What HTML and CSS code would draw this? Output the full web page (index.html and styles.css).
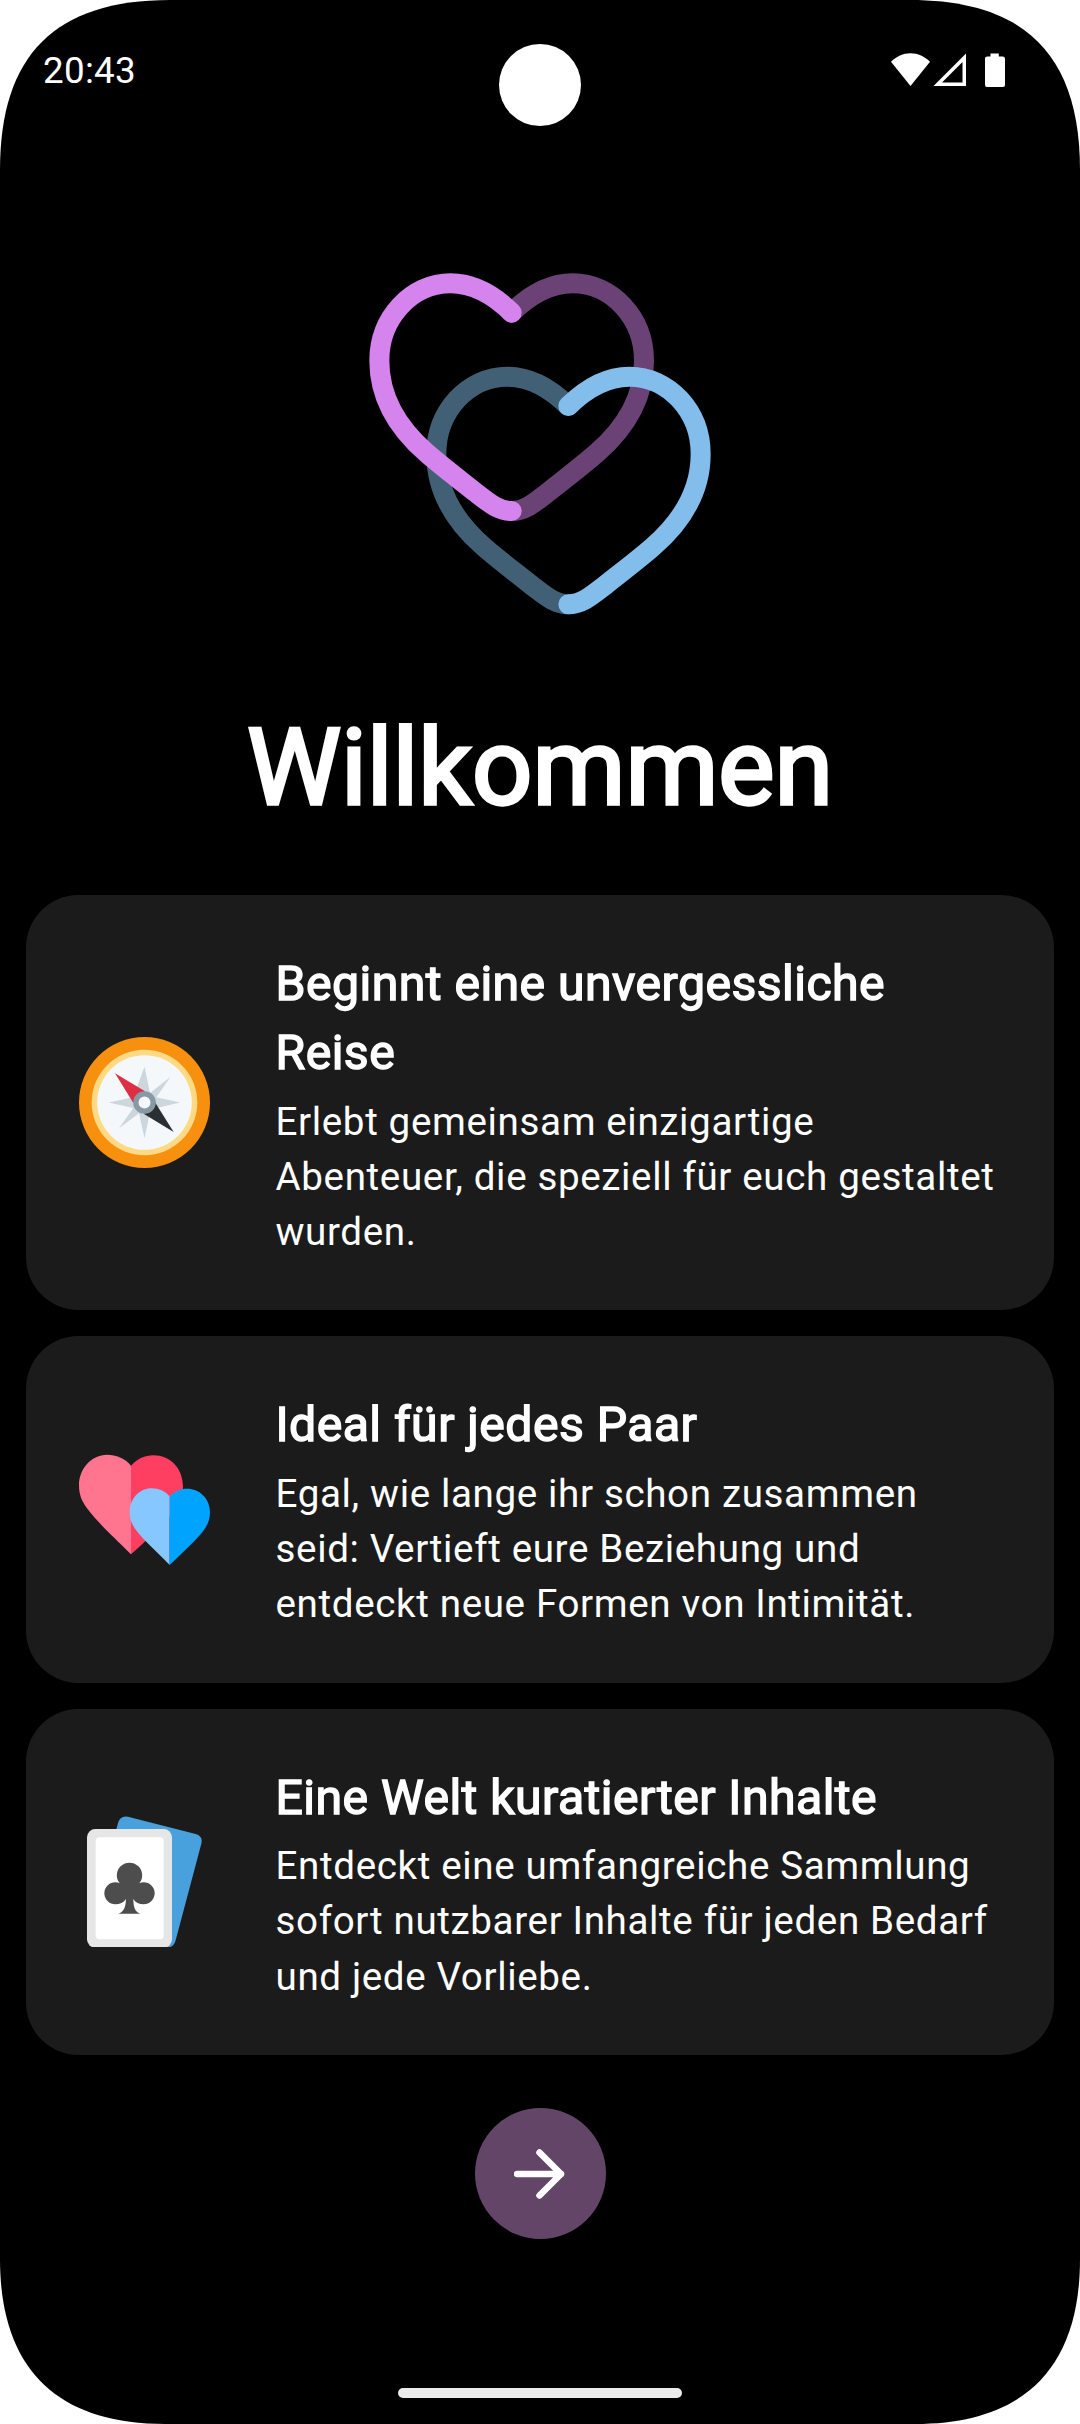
FILE: index.html
```html
<!DOCTYPE html>
<html lang="de">
<head>
<meta charset="utf-8">
<title>Willkommen</title>
<link rel="stylesheet" href="styles.css">
</head>
<body>
<div class="screen">
  <header class="status-bar">
    <span class="clock">20:43</span>
    <svg class="status-icons" viewBox="0 0 120 36" aria-hidden="true">
      <path fill="#fff" d="M0 8.8C5.500 3.500 12 .3 19.500 .3S33.500 3.500 39 8.800L19.500 33Z"/>
      <path fill="#fff" fill-rule="evenodd" d="M42.500 33L75 .5V33ZM51 29.500H71.500V9Z"/>
      <path fill="#fff" d="M99.500 .5h8.300v3h4a2.200 2.200 0 0 1 2.200 2.200V32a2 2 0 0 1-2 2H96a2 2 0 0 1-2-2V5.700a2.200 2.200 0 0 1 2.200-2.200h3.300z"/>
    </svg>
  </header>
  <div class="camera"></div>

  <main class="content">
    <svg class="logo" viewBox="0 0 1140 1140" aria-hidden="true">
      <g fill="none" stroke-width="60" stroke-linecap="round">
        <path stroke="#6b4275" d="M485 188C540 134 605 100 668 100C786 100 882 204 882 332C882 447 820 540 738 611C692 651 640 690 595 726C555 757 525 783 485 783"/>
        <path stroke="#426075" d="M655 468C600 414 535 380 472 380C354 380 259 484 259 612C259 727 320 820 402 891C448 931 500 970 545 1006C585 1037 615 1063 655 1063"/>
        <path stroke="#d583ed" d="M485 188C430 134 365 100 302 100C184 100 88 204 88 332C88 447 150 540 232 611C278 651 330 690 375 726C415 757 445 783 485 783"/>
        <path stroke="#82bdeb" d="M655 468C710 414 775 380 838 380C956 380 1052 484 1052 612C1052 727 990 820 908 891C862 931 810 970 765 1006C725 1037 695 1063 655 1063"/>
      </g>
    </svg>

    <h1 class="title">Willkommen</h1>

    <section class="cards">
      <article class="card">
        <svg class="card-icon" viewBox="0 0 393 393" aria-hidden="true">
          <circle cx="196.500" cy="196.500" r="196.500" fill="#f7900e"/>
          <circle cx="196.500" cy="196.500" r="158.500" fill="#ffd983"/>
          <circle cx="196.500" cy="196.500" r="142" fill="#f5f8fa"/>
          <path fill="#ccd6dd" d="M196.500 89L213 168L274 120L232 181L304 196.500L232 213L213 226L196.500 304L180 229L120 274L163 213L89 196.500L163 181Z"/>
          <path fill="#dd2e44" d="M108 109L198 163L163 198Z"/>
          <path fill="#292f33" d="M284 285L195 231L229 197Z"/>
          <circle cx="196.500" cy="196.500" r="26" fill="#f5f8fa" stroke="#8899a6" stroke-width="16"/>
        </svg>
        <div class="card-text">
          <h2>Beginnt eine unvergessliche Reise</h2>
          <p>Erlebt gemeinsam einzigartige Abenteuer, die speziell für euch gestaltet wurden.</p>
        </div>
      </article>

      <article class="card">
        <svg class="card-icon" viewBox="0 32 393 393" aria-hidden="true">
          <path fill="#ff748e" d="M156 363C100 307 58 270 24 225C8 202 0 184 0 155C0 106 38 64 84 64C111 64 138 74 156 97Z"/>
          <path fill="#ff3f62" d="M156 97C176 76 197 66 223 66C273 66 312 105 312 160C312 190 302 212 286 232C260 268 212 313 156 363Z"/>
          <path fill="#87c7ff" d="M272 395C230 351 197 324 171 290C158 272 152 257 152 236C152 196 182 165 218 165C240 165 258 173 272 189Z"/>
          <path fill="#00a4ff" d="M272 189C288 174 304 166 324 166C362 166 393 196 393 236C393 261 384 278 372 294C349 323 313 356 272 395Z"/>
        </svg>
        <div class="card-text">
          <h2>Ideal für jedes Paar</h2>
          <p>Egal, wie lange ihr schon zusammen seid: Vertieft eure Beziehung und entdeckt neue Formen von Intimität.</p>
        </div>
      </article>

      <article class="card">
        <svg class="card-icon" viewBox="27 49 393 393" aria-hidden="true">
          <path fill="#48a0dc" d="M144 70Q150 47 174 51L377 103Q400 110 394 132L317 422Q311 444 290 444L120 430V160Z"/>
          <rect x="51" y="88" width="255" height="356" rx="25" fill="#e6e6e6"/>
          <rect x="77" y="113" width="204" height="306" rx="12" fill="#fff"/>
          <path fill="#4d4d4d" d="M145 342C160 337 167 326 168 298C160 309 150 314 136 314A33 33 0 0 1 136 248Q143 248 149 251A38 38 0 1 1 208 251Q214 248 221 248A33 33 0 0 1 221 314C207 314 197 309 190 298C190 326 197 337 211 342Z"/>
        </svg>
        <div class="card-text">
          <h2>Eine Welt kuratierter Inhalte</h2>
          <p>Entdeckt eine umfangreiche Sammlung sofort nutzbarer Inhalte für jeden Bedarf und jede Vorliebe.</p>
        </div>
      </article>
    </section>

    <button class="next" type="button" aria-label="Weiter">
      <svg viewBox="0 0 52 52" aria-hidden="true">
        <path fill="none" stroke="#fff" stroke-width="6.500" stroke-linecap="round" stroke-linejoin="round" d="M3 26H47M25.500 4.500L47 26L25.500 47.500"/>
      </svg>
    </button>
  </main>

  <div class="home-bar"></div>
</div>
</body>
</html>
```
FILE: styles.css
```css
* {
  box-sizing: border-box;
}

body {
  margin: 0;
  background: #fff;
  font-family: Roboto, sans-serif;
  color: #fff;
}

.screen {
  position: relative;
  display: flex;
  flex-direction: column;
  align-items: center;
  width: 1080px;
  height: 2424px;
  padding-bottom: 26px;
  background: #000;
  /* display outline with continuous-curvature corners */
  clip-path: path("M0 170C0 55 55 0 170 0H910C1025 0 1080 55 1080 170V2259C1080 2368 1024 2424 915 2424H165C56 2424 0 2368 0 2259Z");
  overflow: hidden;
}

.status-bar {
  display: flex;
  align-items: center;
  justify-content: space-between;
  width: 100%;
  height: 142px;
  padding: 0 69px 0 43px;
}

.clock {
  font-size: 36.75px;
  line-height: 44px;
  letter-spacing: 0.3px;
}

.status-icons {
  width: 120px;
  height: 36px;
}

.camera {
  position: absolute;
  top: 43.5px;
  left: 499px;
  width: 82px;
  height: 82px;
  border-radius: 50%;
  background: #fff;
}

.content {
  display: flex;
  flex: 1;
  flex-direction: column;
  align-items: center;
  width: 100%;
  padding: 108px 26px 0;
}

.logo {
  width: 380px;
  height: 380px;
}

.title {
  margin: 68px 0 0;
  font-size: 106px;
  font-weight: 400;
  line-height: 140px;
  -webkit-text-stroke: 3.3px #fff;
}

.cards {
  display: flex;
  flex-direction: column;
  gap: 26px;
  width: 100%;
  margin-top: 57px;
}

.card {
  display: flex;
  align-items: center;
  gap: 66px;
  height: 346.5px;
  padding: 0 52.5px;
  border-radius: 52.5px;
  background: #1b1b1b;
}

.card:first-child {
  height: 415px;
}

.card-icon {
  flex: none;
  width: 131px;
  height: 131px;
}

.card-text {
  flex: 1;
  padding-top: 3px;
}

.card-text h2 {
  margin: 0 0 6.5px;
  font-size: 48.2px;
  font-weight: 400;
  line-height: 69px;
  letter-spacing: 0.45px;
  -webkit-text-stroke: 1.45px #fff;
}

.card-text p {
  margin: 0;
  font-size: 38.6px;
  line-height: 55.125px;
  letter-spacing: 0.63px;
}

.next {
  display: flex;
  align-items: center;
  justify-content: center;
  width: 131px;
  height: 131px;
  margin-top: 53px;
  padding: 0;
  border: 0;
  border-radius: 50%;
  background: #634568;
}

.next svg {
  width: 52px;
  height: 52px;
}

.home-bar {
  width: 284px;
  height: 10px;
  border-radius: 5px;
  background: #ebebeb;
}
```
